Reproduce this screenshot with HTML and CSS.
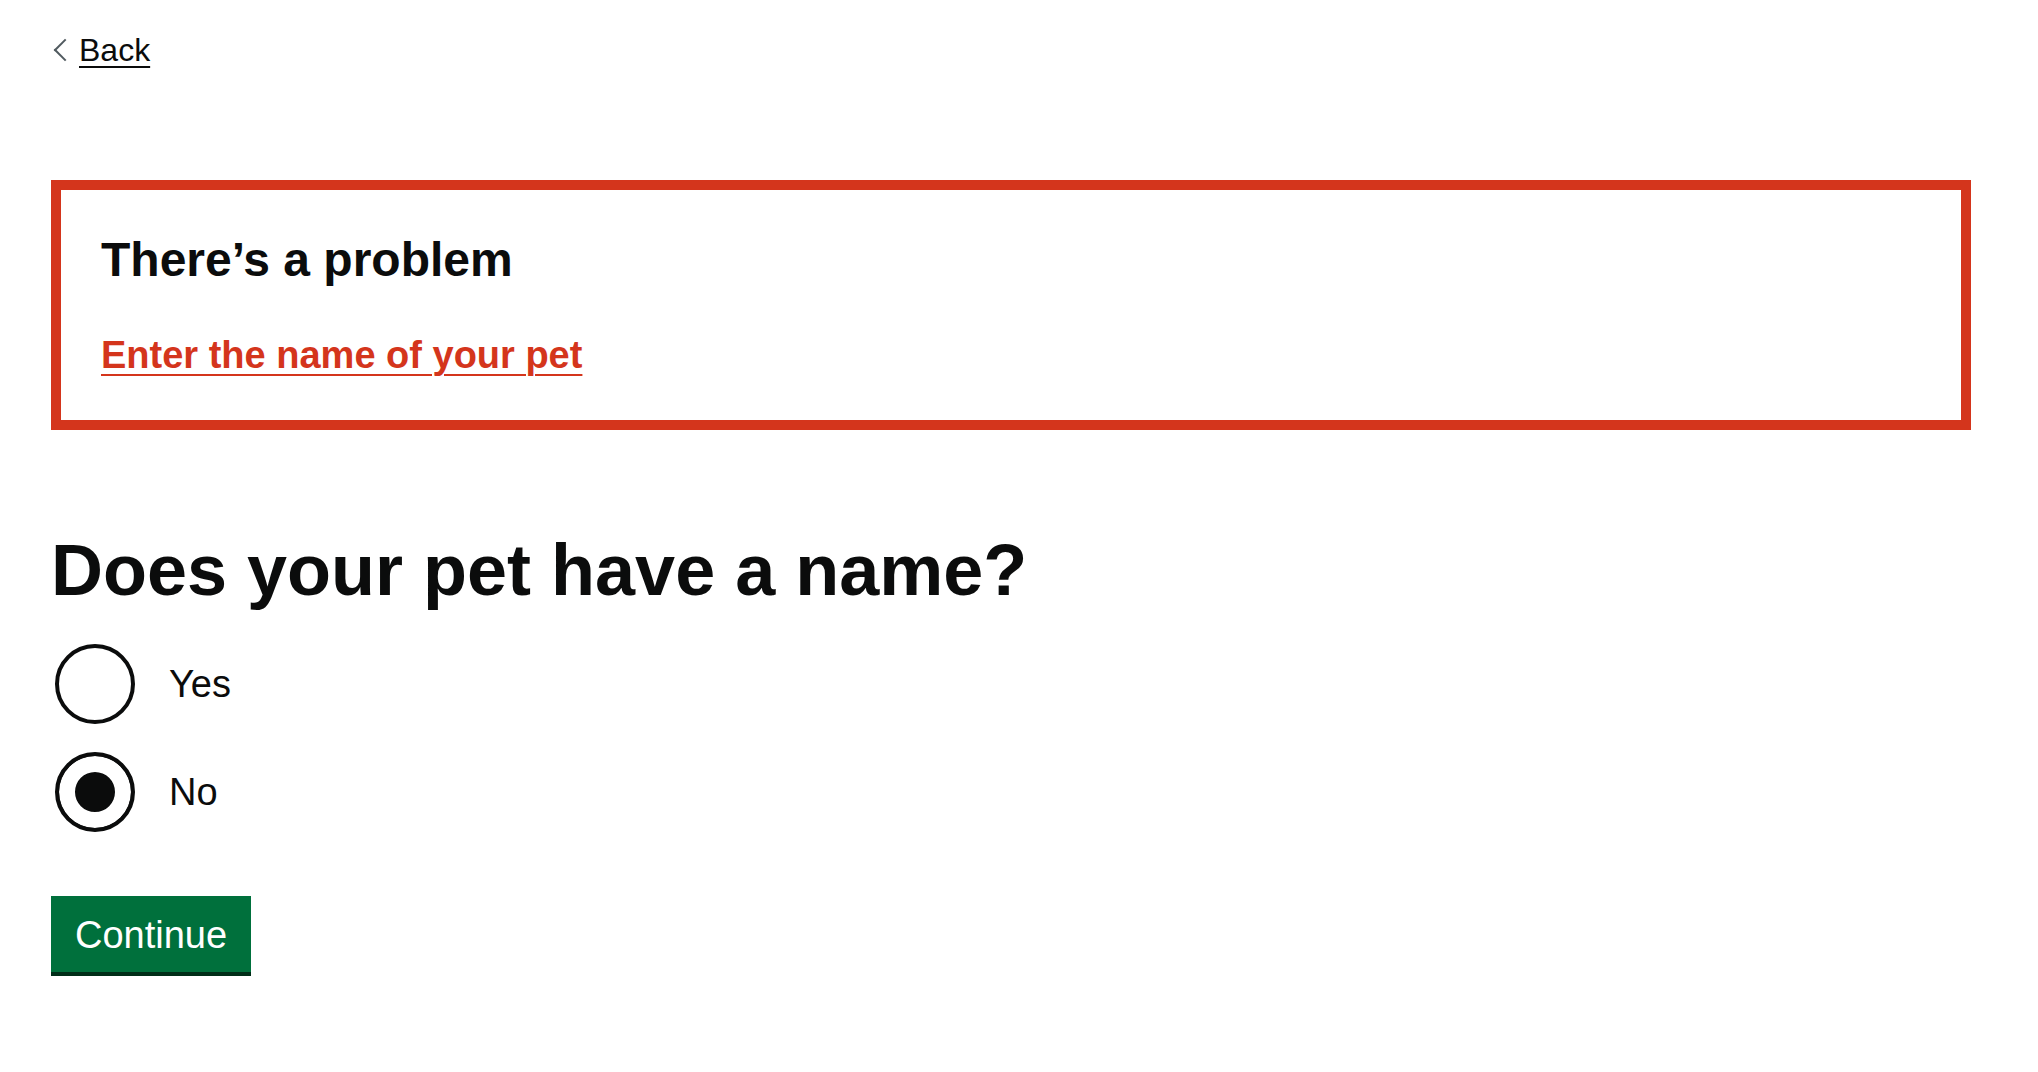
FILE: index.html
```html
<!DOCTYPE html>
<html lang="en">
<head>
<meta charset="utf-8">
<title>Does your pet have a name?</title>
<link rel="stylesheet" href="styles.css">
</head>
<body>
<div class="width-container">
  <a href="#" class="back-link">Back</a>
  <main class="main-wrapper">
    <div class="error-summary">
      <h2 class="error-summary__title">There’s a problem</h2>
      <ul class="error-summary__list">
        <li><a href="#pet-name">Enter the name of your pet</a></li>
      </ul>
    </div>
    <form>
      <div class="form-group">
        <fieldset class="fieldset">
          <legend class="fieldset__legend">Does your pet have a name?</legend>
          <div class="radios">
            <div class="radios__item">
              <input class="radios__input" id="pet-name" name="pet-name" type="radio" value="yes">
              <label class="radios__label" for="pet-name">Yes</label>
            </div>
            <div class="radios__item">
              <input class="radios__input" id="pet-name-2" name="pet-name" type="radio" value="no" checked>
              <label class="radios__label" for="pet-name-2">No</label>
            </div>
          </div>
        </fieldset>
      </div>
      <button type="submit" class="button">Continue</button>
    </form>
  </main>
</div>
</body>
</html>
```

FILE: styles.css
```css
html, body {
  margin: 0;
  padding: 0;
  background: #ffffff;
}

body {
  font-family: "Liberation Sans", Arial, sans-serif;
  color: #0b0c0c;
}

.width-container {
  width: 1920px;
  margin-left: 51px;
}

.back-link {
  position: relative;
  display: inline-block;
  margin-top: 30px;
  margin-bottom: 30px;
  padding-left: 28px;
  font-size: 32px;
  line-height: 40px;
  color: #0b0c0c;
  text-decoration: underline;
  text-decoration-thickness: 2px;
  text-underline-offset: 0.1578em;
}

.back-link::before {
  content: "";
  position: absolute;
  top: 0;
  bottom: 0;
  left: 6px;
  width: 14px;
  height: 14px;
  margin: auto 0;
  border-style: solid;
  border-color: #505a5f;
  border-width: 2px 2px 0 0;
  transform: rotate(225deg);
}

.main-wrapper {
  display: block;
  padding-top: 80px;
  padding-bottom: 80px;
}

.error-summary {
  border: 10px solid #d4351c;
  padding: 40px;
  margin-bottom: 100px;
}

.error-summary__title {
  margin: 0 0 40px;
  font-size: 48px;
  line-height: 60px;
  font-weight: 700;
}

.error-summary__list {
  list-style: none;
  margin: 0;
  padding: 0;
}

.error-summary__list a {
  font-size: 38px;
  line-height: 50px;
  font-weight: 700;
  color: #d4351c;
  text-decoration: underline;
  text-decoration-thickness: 2px;
  text-underline-offset: 0.1578em;
}

.form-group {
  margin-bottom: 60px;
}

.fieldset {
  margin: 0;
  padding: 0;
  border: 0;
  min-width: 0;
}

.fieldset__legend {
  display: table;
  padding: 0;
  margin-bottom: 30px;
  font-size: 72px;
  line-height: 80px;
  font-weight: 700;
}

.radios__item {
  display: flex;
  margin-bottom: 20px;
}

.radios__item:last-child {
  margin-bottom: 0;
}

.radios__input {
  appearance: none;
  -webkit-appearance: none;
  flex: none;
  box-sizing: border-box;
  width: 80px;
  height: 80px;
  margin: 4px;
  border: 4px solid #0b0c0c;
  border-radius: 50%;
  background: #ffffff;
}

.radios__input:checked {
  background: #0b0c0c;
  box-shadow: inset 0 0 0 16px #ffffff;
}

.radios__label {
  align-self: center;
  padding: 14px 30px;
  font-size: 38px;
  line-height: 50px;
  color: #0b0c0c;
}

.button {
  display: inline-block;
  margin: 0;
  padding: 16px 20px 14px;
  border: 4px solid transparent;
  border-radius: 0;
  background: #00703c;
  color: #ffffff;
  box-shadow: 0 4px 0 #002d18;
  font-family: "Liberation Sans", Arial, sans-serif;
  font-size: 38px;
  line-height: 1;
  font-weight: 400;
  text-align: center;
  cursor: pointer;
}
```
